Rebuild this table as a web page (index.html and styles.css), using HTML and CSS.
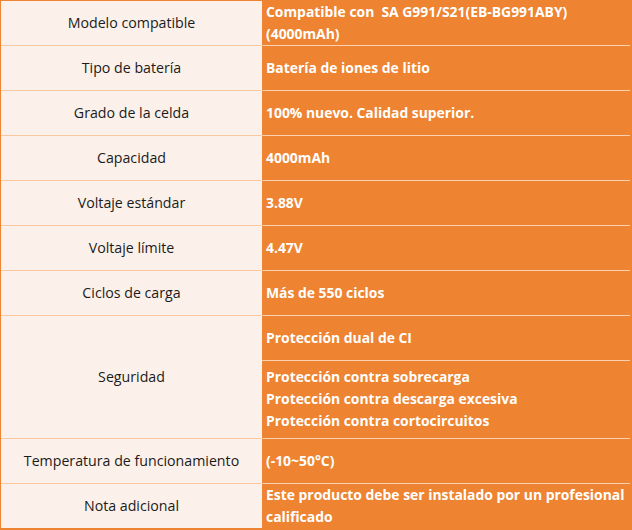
FILE: index.html
```html
<!DOCTYPE html>
<html lang="es">
<head>
<meta charset="utf-8">
<link rel="stylesheet" href="styles.css">
</head>
<body>
<div class="spec">
  <div class="k r1">Modelo compatible</div>
  <div class="v r1">Compatible con&nbsp; SA G991/S21(EB-BG991ABY)<br>(4000mAh)</div>
  <div class="k">Tipo de batería</div>
  <div class="v">Batería de iones de litio</div>
  <div class="k">Grado de la celda</div>
  <div class="v">100% nuevo. Calidad superior.</div>
  <div class="k">Capacidad</div>
  <div class="v">4000mAh</div>
  <div class="k">Voltaje estándar</div>
  <div class="v">3.88V</div>
  <div class="k">Voltaje límite</div>
  <div class="v">4.47V</div>
  <div class="k">Ciclos de carga</div>
  <div class="v">Más de 550 ciclos</div>
  <div class="k span2">Seguridad</div>
  <div class="v">Protección dual de CI</div>
  <div class="v">Protección contra sobrecarga<br>Protección contra descarga excesiva<br>Protección contra cortocircuitos</div>
  <div class="k">Temperatura de funcionamiento</div>
  <div class="v">(-10~50°C)</div>
  <div class="k last">Nota adicional</div>
  <div class="v last">Este producto debe ser instalado por un profesional<br>calificado</div>
</div>
</body>
</html>
```
FILE: styles.css
```css
html, body {
  margin: 0;
  padding: 0;
  background: #ee8331;
}
.spec {
  width: 632px;
  height: 530px;
  box-sizing: border-box;
  border-style: solid;
  border-color: #ee8331;
  border-width: 1px 2px 2px 1px;
  display: grid;
  grid-template-columns: 261px 368px;
  grid-template-rows: repeat(8, 45px) 78px 45px 44px;
  background: #ee8331;
}
.k {
  background: #fcf1ea;
  color: #1b1b1b;
  font-family: "Open Sans", "Noto Sans", sans-serif;
  font-size: 14.2px;
  display: flex;
  align-items: center;
  justify-content: center;
  text-align: center;
  padding-bottom: 2px;
  border-bottom: 1px solid #f9c8a0;
  box-sizing: border-box;
}
.v {
  color: #ffffff;
  font-family: "Open Sans", "Noto Sans", sans-serif;
  font-weight: 700;
  font-size: 13.9px;
  line-height: 22px;
  display: flex;
  flex-direction: column;
  justify-content: center;
  padding-left: 4px;
  padding-bottom: 1px;
  border-bottom: 1px solid #fbd2b0;
  box-sizing: border-box;
}
.span2 {
  grid-row: span 2;
}
.last {
  border-bottom: none;
}
```
